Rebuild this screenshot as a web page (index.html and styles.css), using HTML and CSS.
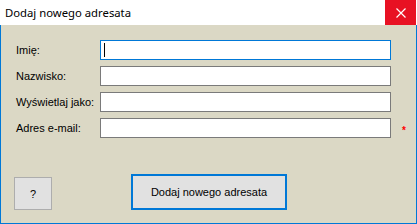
FILE: index.html
```html
<!DOCTYPE html>
<html lang="pl">
<head>
    <meta charset="UTF-8">
    <link rel="stylesheet" href="styles.css">
    <title>Dodaj nowego adresata</title>
</head>
<body>
    <div class="okno">
        <div class="pasekTytulu">
            <span class="tytul">Dodaj nowego adresata</span>
            <span class="zamknij">
                <svg width="10" height="10" viewBox="0 0 10 10">
                    <path d="M0.5 0.5 L9.5 9.5 M9.5 0.5 L0.5 9.5" stroke="#fff" stroke-width="1.2"/>
                </svg>
            </span>
        </div>

        <div class="tresc">
            <!-- Formularz adresata -->
            <div class="formularz">
                <label>Imię:</label>
                <div class="pole aktywne"><span class="kursor"></span></div>
                <span></span>

                <label>Nazwisko:</label>
                <div class="pole"></div>
                <span></span>

                <label>Wyświetlaj jako:</label>
                <div class="pole"></div>
                <span></span>

                <label>Adres e-mail:</label>
                <div class="pole"></div>
                <span class="wymagane">*</span>
            </div>

            <div class="przyciski">
                <button type="button" class="pomoc">?</button>
                <button type="button" class="dodaj">Dodaj nowego adresata</button>
            </div>
        </div>
    </div>
</body>
</html>
```

FILE: styles.css
```css
body {
    margin: 0;
    font-family: "Liberation Sans", Arial, sans-serif;
    font-size: 11px;
    color: #000;
}

.okno {
    width: 417px;
    height: 224px;
    display: flex;
    flex-direction: column;
}

.pasekTytulu {
    height: 25px;
    background-color: #fff;
    display: flex;
    align-items: center;
    justify-content: space-between;
}

.tytul {
    font-family: "Noto Sans", "Open Sans", sans-serif;
    font-size: 11.3px;
    padding-left: 5px;
}

.zamknij {
    width: 31px;
    height: 25px;
    margin-right: 1px;
    background-color: #e81123;
    display: flex;
    align-items: center;
    justify-content: center;
}

.tresc {
    flex: 1;
    background-color: #dbd8c5;
    border: 1px solid #0078d7;
    border-top: none;
}

.formularz {
    display: grid;
    grid-template-columns: 84px 291px 26px;
    grid-auto-rows: 20px;
    row-gap: 6px;
    align-items: center;
    padding: 15px 0 0 15px;
}

.pole {
    height: 20px;
    box-sizing: border-box;
    background-color: #fff;
    border: 1px solid #7a7a7a;
    position: relative;
}

.pole.aktywne {
    border-color: #0078d7;
}

.kursor {
    position: absolute;
    left: 3px;
    top: 2px;
    width: 1px;
    height: 14px;
    background-color: #000;
}

.wymagane {
    color: #f00;
    font-size: 10px;
    font-weight: bold;
    padding-left: 11px;
    padding-top: 4px;
}

.przyciski {
    display: flex;
    align-items: flex-end;
    padding: 36px 0 0 13px;
}

.przyciski button {
    font-family: "Liberation Sans", Arial, sans-serif;
    font-size: 11px;
    background-color: #e1e1e1;
    color: #000;
    padding: 0;
}

.pomoc {
    width: 38px;
    height: 33px;
    border: 1px solid #adadad;
}

.dodaj {
    width: 156px;
    height: 36px;
    margin-left: 79px;
    border: 2px solid #0078d7;
}
```
